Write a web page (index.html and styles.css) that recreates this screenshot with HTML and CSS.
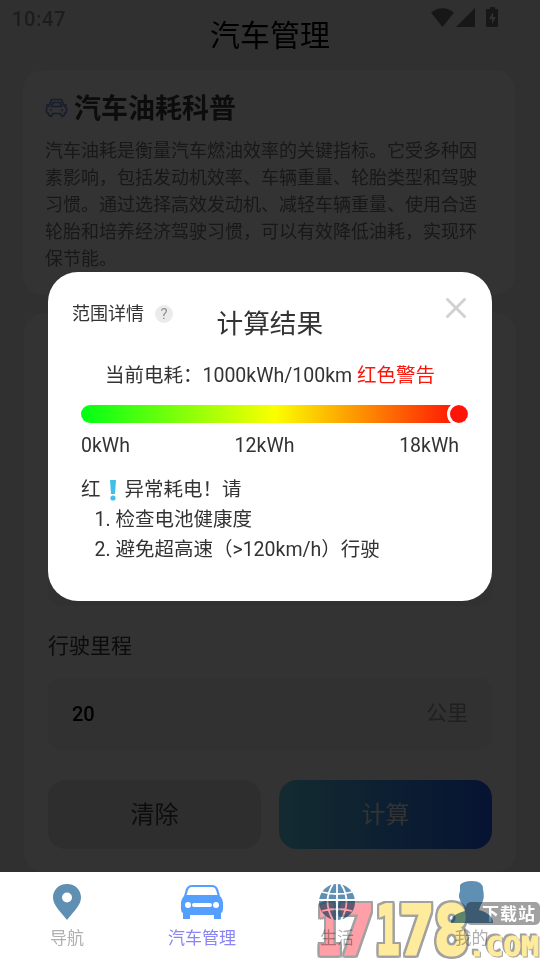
FILE: index.html
```html
<!DOCTYPE html>
<html lang="zh-CN">
<head>
<meta charset="utf-8">
<title>汽车管理</title>
<link rel="stylesheet" href="styles.css">
</head>
<body>
<div class="app">
  <header class="header">
    <span class="clock">10:47</span>
    <h1>汽车管理</h1>
    <svg class="status" width="68" height="21" viewBox="0 0 68 21"><path d="M0 5.500Q11.500-3 23 5.500L11.500 20ZM25 20L44 1V20Z"/><path fill-rule="evenodd" d="M59 0h5v2h2q1 0 1 1v16q0 1-1 1H56q-1 0-1-1V3q0-1 1-1h3ZM62 5L58 12H61V17L65 10H62Z"/></svg>
  </header>
  <main>
    <section class="card intro">
      <h2><svg width="23" height="20" viewBox="0 0 23 20"><path d="M6.500 1.500H16.500L18.500 7L21.500 10V14L19.500 15.500V17L17 18.500L15 15.500H8L6 18.500L3.500 17V15.500L1.500 14V10L4.500 7ZM6.500 8.500L8 4.500H15L16.500 8.500ZM1 7H4M19 7H22M6 11V13M17 11V13"/></svg>汽车油耗科普</h2>
      <p>汽车油耗是衡量汽车燃油效率的关键指标。它受多种因素影响，包括发动机效率、车辆重量、轮胎类型和驾驶习惯。通过选择高效发动机、减轻车辆重量、使用合适轮胎和培养经济驾驶习惯，可以有效降低油耗，实现环保节能。</p>
    </section>
    <section class="card form">
      <div class="field upper"></div>
      <label>行驶里程</label>
      <div class="field"><b>20</b><span>公里</span></div>
      <div class="buttons"><button class="clear">清除</button><button class="calc">计算</button></div>
    </section>
  </main>
  <nav>
    <a><svg width="30" height="38" viewBox="0 0 30 38"><path fill="#5f8fb3" fill-rule="evenodd" d="M15 1C6.500 1 1 7.200 1 14.500C1 22 8 28 15 37C22 28 29 22 29 14.500C29 7.200 23.500 1 15 1ZM15 9.500A5 5 0 1 1 15 19.500A5 5 0 1 1 15 9.500Z"/></svg><span>导航</span></a>
    <a class="active"><svg width="44" height="38" viewBox="0 0 44 38"><path fill="#559fff" fill-rule="evenodd" d="M12 2H32Q36 2 38 6L40 13Q43 16 43 21V26Q43 29 41 30V36H34V32H10V36H3V30Q1 29 1 26V21Q1 16 4 13L6 6Q8 2 12 2ZM12 4Q9 4 8 7L6.500 12H37.500L36 7Q35 4 32 4ZM8 19A3 3 0 1 0 8 25A3 3 0 1 0 8 19ZM36 19A3 3 0 1 0 36 25A3 3 0 1 0 36 19ZM14 20A2 2 0 0 0 14 24H30A2 2 0 0 0 30 20Z"/></svg><span>汽车管理</span></a>
    <a><svg width="38" height="38" viewBox="0 0 38 38"><circle cx="19" cy="19" r="18" fill="#5f8fb3"/><path fill="none" stroke="#fff" stroke-width="1.800" d="M19 0V38M0 17H38M4 9Q19 13 34 9M4 28Q19 24 34 28M15 1Q4 18 15 37M23 1Q34 18 23 37"/></svg><span>生活</span></a>
    <a><svg class="person" width="44" height="44" viewBox="0 0 44 44"><path fill="#5f8fb3" d="M10 5Q13 1 22 1Q33 1 33 9Q35 18 32 23Q30 26 29 30Q43 34 43 43H1Q0 35 15 31Q15 28 13 25Q10 22 9 17Q9 13 10 11Z"/></svg><span>我的</span></a>
  </nav>
  <div class="modal">
    <div class="modal-top">
      <span class="range">范围详情<i>?</i></span>
      <strong>计算结果</strong>
      <svg width="22" height="22" viewBox="0 0 22 22"><path d="M2.500 2.500L19.500 19.500M19.500 2.500L2.500 19.500"/></svg>
    </div>
    <p class="current">当前电耗：1000kWh/100km <em>红色警告</em></p>
    <div class="gauge"><i></i></div>
    <div class="ticks"><span>0kWh</span><span>12kWh</span><span>18kWh</span></div>
    <div class="advice">
      <p>红<svg width="24" height="24" viewBox="0 0 24 24"><path d="M9 2H15L14 16H10Z"/><circle cx="12" cy="20" r="2.600"/></svg>异常耗电！请</p>
      <p class="step">1. 检查电池健康度</p>
      <p class="step">2. 避免超高速（&gt;120km/h）行驶</p>
    </div>
  </div>
  <svg class="mark" width="224" height="62" viewBox="0 0 224 62">
    <rect x="150" y="4" width="74" height="23" rx="5" class="tag"/>
    <g class="big">
      <text transform="translate(1 56) scale(.58 1)" class="pink">1</text>
      <text transform="translate(22 56) scale(.88 1)" class="pink">7</text>
      <text transform="translate(60 56) scale(.58 1)">1</text>
      <text transform="translate(83 56) scale(.86 1)">7</text>
      <text transform="translate(118 56) scale(.86 1)">8</text>
    </g>
    <text class="com" x="152" y="58" textLength="71" lengthAdjust="spacingAndGlyphs">.COM</text>
    <text class="zh" x="166" y="22" textLength="53">下载站</text>
  </svg>
</div>
</body>
</html>
```
FILE: styles.css
```css
* { box-sizing: border-box; }
body { margin: 0; width: 540px; height: 960px; overflow: hidden; background: #303030; font-family: Roboto, "Noto Sans CJK SC", sans-serif; font-weight: 400; }
h1, h2, p { margin: 0; }
.app { position: relative; height: 960px; display: flex; flex-direction: column; }
.header { height: 70px; display: grid; grid-template-columns: 1fr 120px 1fr; padding: 0 12px; }
.clock { font-size: 20px; font-weight: 500; line-height: 24px; padding-top: 7px; letter-spacing: .7px; color: #1d1d1d; }
h1 { font-size: 30px; font-weight: 400; line-height: 72px; color: #000; white-space: nowrap; }
.status { justify-self: end; margin: 7px 29px 0 0; fill: #171717; }
main { height: 802px; padding: 0 24px; }
.card { background: #333; border-radius: 20px; }
.intro { height: 225px; margin: 0 1px 18px -1px; padding: 18px 22px; }
h2 { display: flex; align-items: center; gap: 6px; height: 37px; font-size: 27px; font-weight: 700; color: #0c0c0c; }
h2 svg { fill: none; stroke: #181d2e; stroke-width: 1.700; stroke-linejoin: round; margin-top: 2px; }
.intro p { margin-top: 12px; width: 434px; font-size: 18px; line-height: 27px; color: #181818; }
.form { height: 559px; padding: 221px 24px 0; }
.field { height: 72px; border-radius: 14px; background: #313131; padding: 0 24px; display: flex; align-items: center; justify-content: space-between; font-size: 21px; color: #202020; }
.field b { font-weight: 500; font-size: 20px; color: #000; }
.field span { margin-top: -6px; }
label { display: block; height: 72px; padding-top: 25px; line-height: 30px; font-size: 21px; color: #0c0c0c; }
.buttons { display: flex; gap: 18px; margin-top: 30px; }
button { flex: 1; height: 69px; border: 0; padding: 0 0 5px; border-radius: 18px; font: inherit; font-size: 24px; }
.clear { background: #2e2e2e; color: #0d0d0d; }
.calc { background: linear-gradient(90deg, #132b30, #061332); color: #333; }
nav { height: 88px; display: grid; grid-template-columns: 134px 136px 134px 135px; background: #fff; }
nav a { display: flex; flex-direction: column; align-items: center; padding-top: 11px; font-size: 17px; line-height: 24px; color: #b0b0b0; }
nav a span { margin-top: 5px; }
nav .active { color: #8985f5; }
nav .person { margin: -3px 0; }
.modal { position: absolute; left: 48px; top: 272px; width: 444px; height: 329px; border-radius: 30px; background: #fff; color: #333; font-size: 19.500px; line-height: 30px; padding: 24px 24px 0; }
.modal-top { display: grid; grid-template-columns: 1fr 107px 1fr; height: 65px; }
.range { display: flex; align-items: center; gap: 11px; height: 36px; font-size: 18px; white-space: nowrap; }
.range i { width: 18px; height: 18px; border-radius: 50%; background: #ebebeb; color: #919191; font-size: 15px; line-height: 18px; font-weight: 400; font-style: normal; text-align: center; }
.modal-top strong { font-size: 26.700px; font-weight: 400; line-height: 56px; white-space: nowrap; }
.modal-top svg { justify-self: end; margin: 1px 1px 0 0; fill: none; stroke: #d1d1d1; stroke-width: 3; stroke-linecap: round; }
.current { text-align: center; white-space: nowrap; }
.current em { font-style: normal; color: #fb160b; }
.gauge { width: 387px; height: 18px; margin: 14px 0 0 9px; display: flex; justify-content: flex-end; border-radius: 9px; background: linear-gradient(90deg, #00ff15, #fbff00 50%, #ff1605 97%); overflow: hidden; }
.gauge i { width: 18px; height: 18px; border-radius: 50%; background: #ff1408; box-shadow: 0 0 0 3px #fff; }
.ticks { display: flex; justify-content: space-between; width: 378px; margin: 8px 0 0 9px; }
.advice { margin: 14px 0 0 9px; }
.advice p { white-space: nowrap; height: 30px; }
.advice svg { vertical-align: -6px; fill: #42bfe8; }
.advice .step { padding-left: 13.500px; }
.mark { position: absolute; left: 316px; top: 898px; mix-blend-mode: multiply; }
.mark text { fill: #ffeb9c; stroke: #ffeb9c; stroke-linejoin: miter; }
.big { filter: drop-shadow(2px 0 0 #a1a1a1) drop-shadow(-2px 0 0 #a1a1a1) drop-shadow(0 2px 0 #a1a1a1) drop-shadow(0 -2px 0 #a1a1a1); }
.big text { font: bold 68px "DejaVu Sans Mono", monospace; stroke-width: 3px; }
.big .pink { fill: #ff9fa7; stroke: #ff9fa7; }
.mark .com { font: bold 26px "DejaVu Sans Mono", monospace; stroke-width: 1px; filter: drop-shadow(1.500px 1.500px 0 #a1a1a1) drop-shadow(-2px -2px 0 #a1a1a1); }
.mark .tag { fill: #a1a1a1; }
.mark .zh { font: bold 17px "Noto Sans CJK SC", sans-serif; fill: #fff; stroke: none; }
```
